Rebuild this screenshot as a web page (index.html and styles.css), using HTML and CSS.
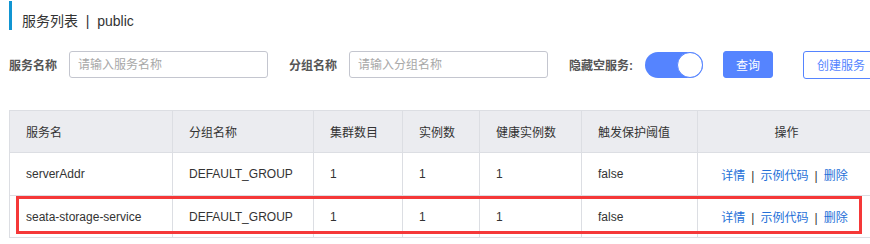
FILE: index.html
```html
<!DOCTYPE html>
<html lang="zh-CN">
<head>
<meta charset="utf-8">
<title>服务列表</title>
<link rel="stylesheet" href="styles.css">
</head>
<body>
<div class="page">
  <div class="title">服务列表&nbsp;&nbsp;|&nbsp;&nbsp;public</div>
  <div class="search">
    <label class="label">服务名称</label>
    <input class="input" type="text" placeholder="请输入服务名称">
    <label class="label">分组名称</label>
    <input class="input" type="text" placeholder="请输入分组名称">
    <label class="label label-switch">隐藏空服务:</label>
    <span class="switch"><span class="knob"></span></span>
    <button class="btn btn-primary">查询</button>
    <button class="btn btn-outline">创建服务</button>
  </div>
  <div class="table-wrap">
    <table class="table">
      <colgroup>
        <col class="c1"><col class="c2"><col class="c3"><col class="c4"><col class="c5"><col class="c6"><col class="c7">
      </colgroup>
      <thead>
        <tr>
          <th>服务名</th><th>分组名称</th><th>集群数目</th><th>实例数</th><th>健康实例数</th><th>触发保护阈值</th><th class="center">操作</th>
        </tr>
      </thead>
      <tbody>
        <tr>
          <td>serverAddr</td><td>DEFAULT_GROUP</td><td>1</td><td>1</td><td>1</td><td>false</td>
          <td class="center ops"><a class="link">详情</a><span class="sep">|</span><a class="link">示例代码</a><span class="sep">|</span><a class="link">删除</a></td>
        </tr>
        <tr>
          <td>seata-storage-service</td><td>DEFAULT_GROUP</td><td>1</td><td>1</td><td>1</td><td>false</td>
          <td class="center ops"><a class="link">详情</a><span class="sep">|</span><a class="link">示例代码</a><span class="sep">|</span><a class="link">删除</a></td>
        </tr>
      </tbody>
    </table>
    <div class="highlight"></div>
  </div>
</div>
</body>
</html>
```
FILE: styles.css
```css
html, body {
  margin: 0;
  padding: 0;
  overflow: hidden;
  background: #fff;
}
body {
  font-family: "Liberation Sans", "Noto Sans CJK SC", sans-serif;
  color: #333;
  font-size: 12px;
}
.page {
  padding-left: 9px;
  width: 866px;
}
.title {
  margin-top: 1px;
  height: 29px;
  box-sizing: border-box;
  border-left: 3px solid #1195d2;
  padding-left: 10px;
  padding-top: 13px;
  font-size: 14px;
  line-height: 14px;
  color: #333;
}
.search {
  display: flex;
  align-items: center;
  margin-top: 21px;
  height: 27px;
  white-space: nowrap;
}
.label {
  font-weight: bold;
  color: #555;
  margin-right: 12px;
  width: 48px;
  flex: none;
}
.label-switch {
  width: 64px;
}
.input {
  box-sizing: border-box;
  width: 199px;
  height: 27px;
  border: 1px solid #c4c6cf;
  border-radius: 3px;
  padding: 0 8px;
  margin: 0 21px 0 0;
  font-family: inherit;
  font-size: 12px;
  color: #333;
  flex: none;
}
.input::placeholder {
  color: #a8a8a8;
}
.switch {
  position: relative;
  box-sizing: border-box;
  width: 58px;
  height: 26px;
  border-radius: 13px;
  background: #5584ff;
  margin-right: 20px;
  flex: none;
}
.knob {
  position: absolute;
  right: 0;
  top: 0;
  box-sizing: border-box;
  width: 26px;
  height: 26px;
  border-radius: 50%;
  background: #fff;
  border: 1px solid #5584ff;
}
.btn {
  box-sizing: border-box;
  height: 27px;
  border-radius: 3px;
  font-family: inherit;
  font-size: 12px;
  padding: 0;
  margin: 0;
  flex: none;
}
.btn-primary {
  width: 50px;
  background: #5584ff;
  border: 1px solid #5584ff;
  color: #fff;
  margin-right: 30px;
}
.btn-outline {
  width: 76px;
  height: 28px;
  background: #fff;
  border: 1px solid #5584ff;
  color: #5584ff;
}
.table-wrap {
  position: relative;
  margin-top: 32px;
}
.table {
  border-collapse: collapse;
  table-layout: fixed;
  width: 866px;
}
.c1 { width: 163px; }
.c2 { width: 141px; }
.c3 { width: 89px; }
.c4 { width: 77px; }
.c5 { width: 102px; }
.c6 { width: 116px; }
.c7 { width: 178px; }
.table th,
.table td {
  border: 1px solid #dcdee3;
  height: 41px;
  padding: 0 0 0 16px;
  text-align: left;
  font-weight: normal;
  color: #333;
  white-space: nowrap;
}
.table th {
  background: #ebecf0;
}
.table tbody tr:first-child td {
  height: 42px;
}
.table .center {
  text-align: center;
  padding: 0;
}
.table .ops {
  padding: 0 4px 0 0;
}
.link {
  color: #2470d8;
  text-decoration: none;
}
.sep {
  margin: 0 6px;
  color: #333;
}
.highlight {
  position: absolute;
  left: 7px;
  top: 86px;
  width: 846px;
  height: 38px;
  box-sizing: border-box;
  border: 3px solid #f53838;
}
```
